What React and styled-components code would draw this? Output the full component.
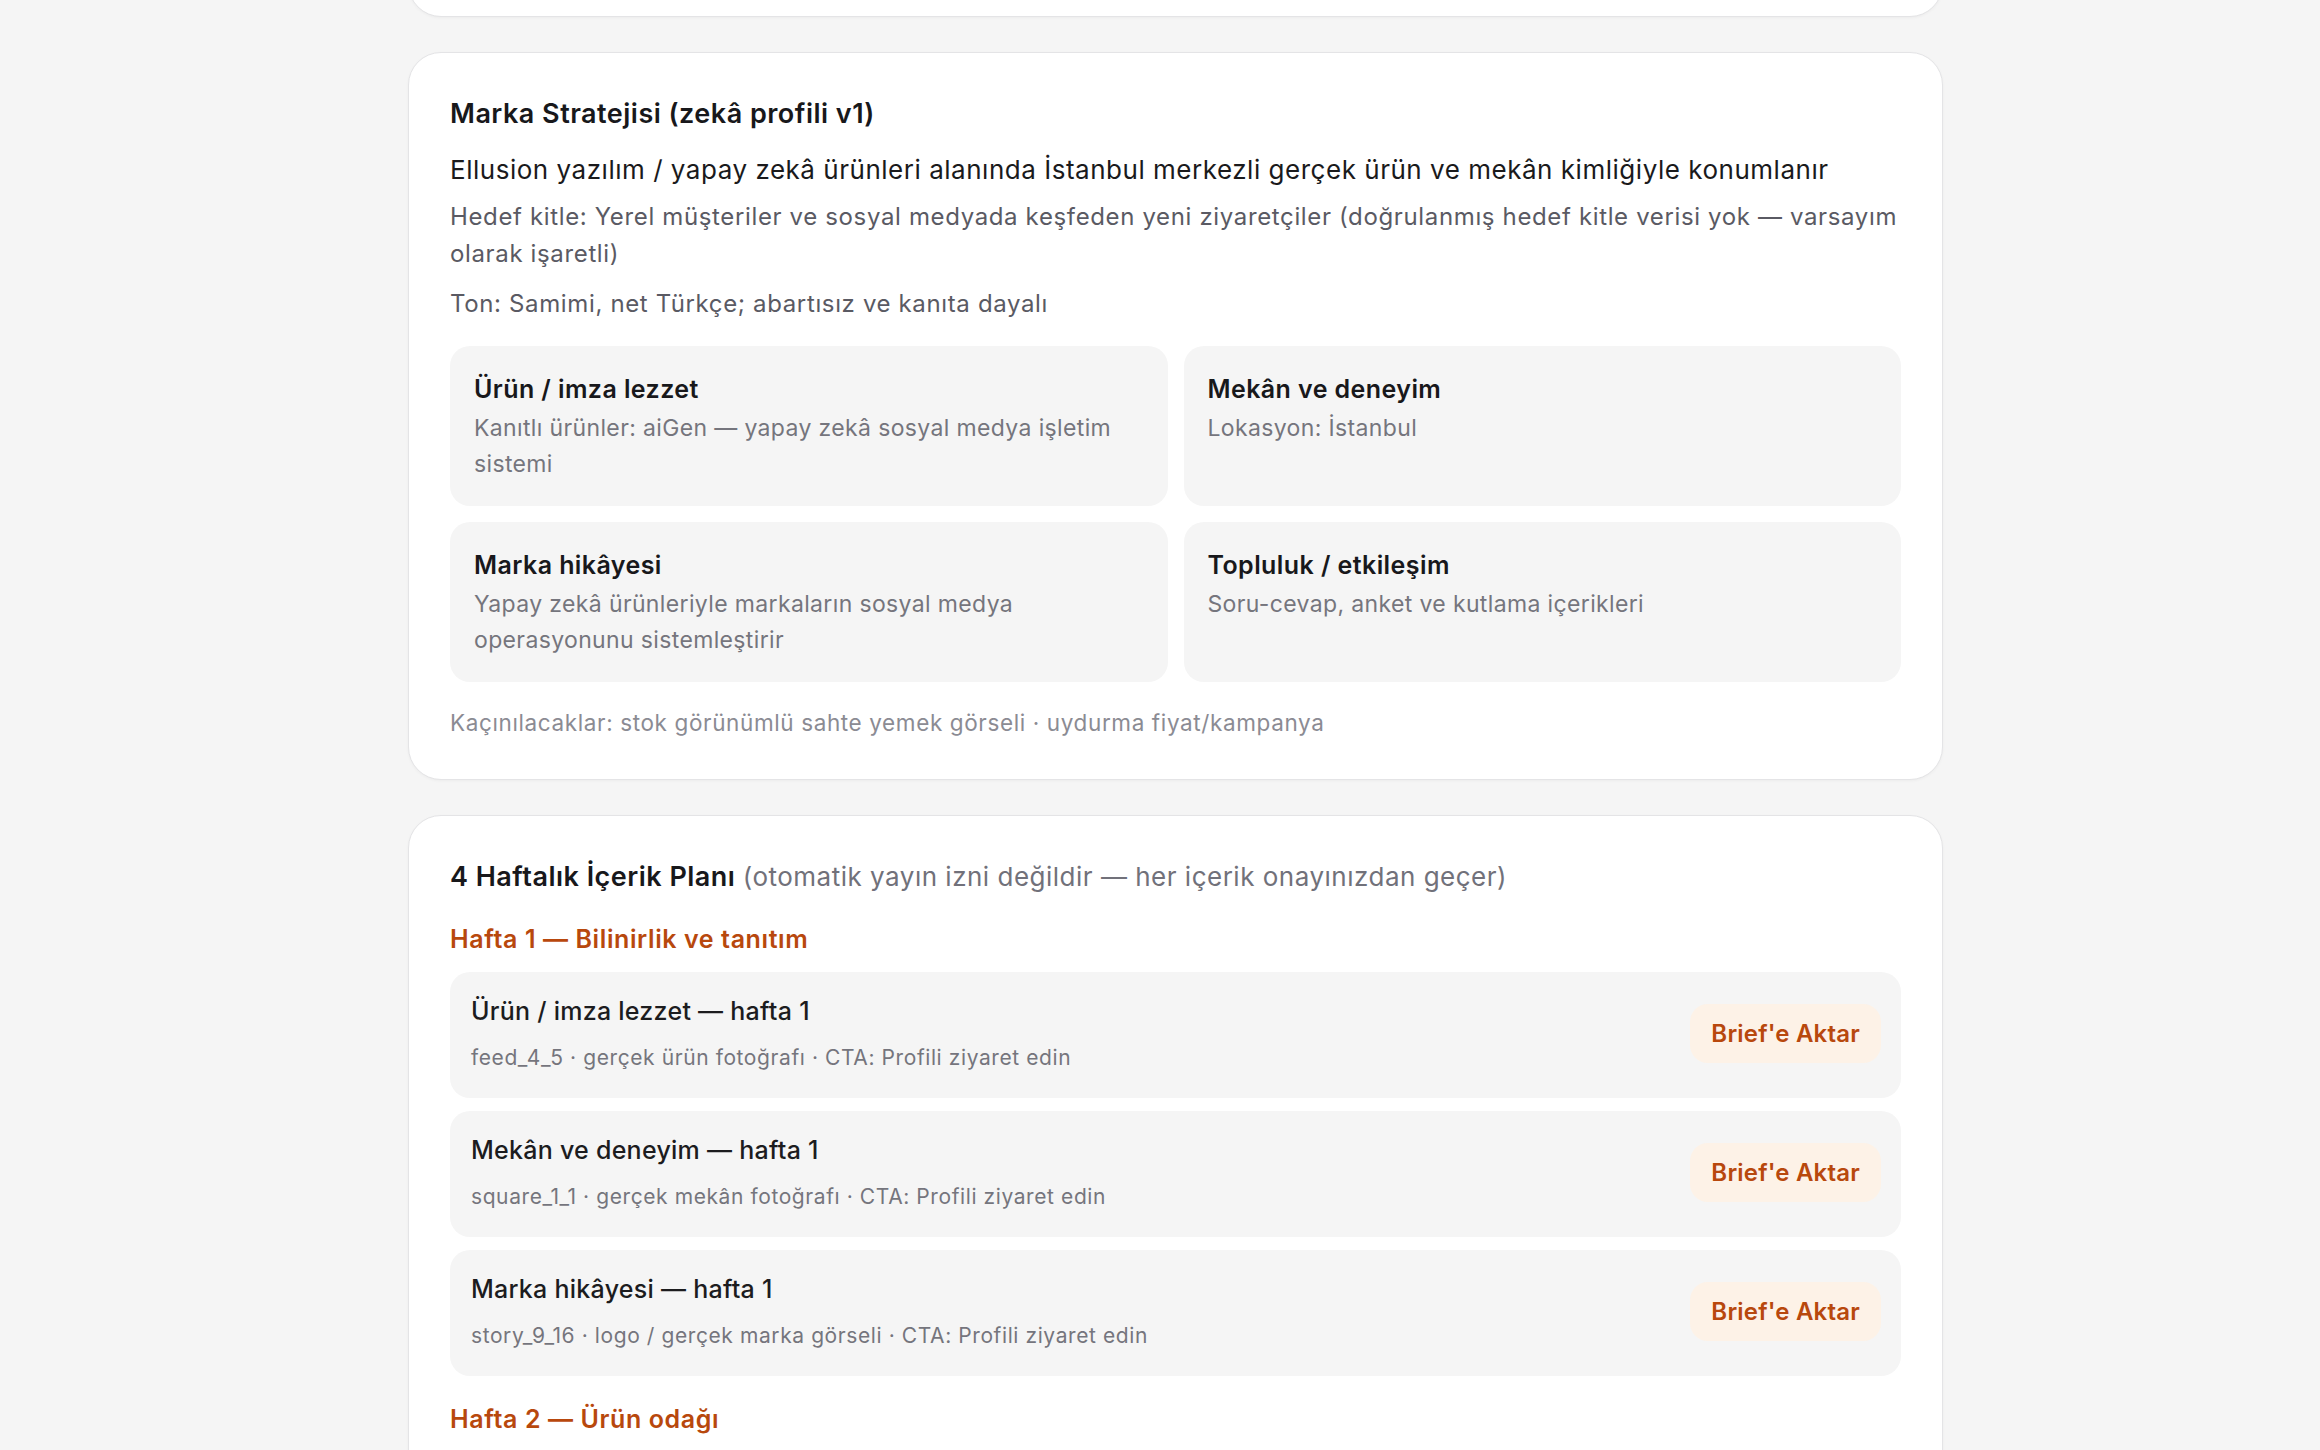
import React from "react";
import styled, { createGlobalStyle } from "styled-components";

const Global = createGlobalStyle`
  html, body { margin: 0; padding: 0; background: #f5f5f5; overflow: hidden; }
  body {
    font-family: Inter, "Noto Sans", "Liberation Sans", sans-serif;
    color: #1c1c1e;
    -webkit-font-smoothing: antialiased;
  }
  * { box-sizing: border-box; }
`;

const Page = styled.main`
  padding: 0 0 80px 408px;
`;

const Column = styled.div`
  width: 1535px;
  display: flex;
  flex-direction: column;
  gap: 35px;
  margin-top: -103px;
`;

const Card = styled.section`
  background: #ffffff;
  border: 1px solid #e4e4e6;
  border-radius: 33px;
  box-shadow: 0 1px 3px rgba(0, 0, 0, 0.04);
  padding: 42px 41px 40px;
`;

const StubCard = styled(Card)`
  height: 120px;
`;

const CardTitle = styled.h2`
  margin: 0;
  font-size: 27px;
  line-height: 38px;
  font-weight: 600;
  letter-spacing: 0.48px;
  color: #18181b;
`;

const TitleNote = styled.span`
  font-size: 26px;
  font-weight: 400;
  letter-spacing: 0.5px;
  color: #71717a;
`;

const Lead = styled.p`
  margin: 18px 0 0;
  font-size: 26px;
  line-height: 38px;
  letter-spacing: 0.52px;
  color: #1a1a1c;
`;

const Para = styled.p`
  margin: ${(p) => p.$gap}px 0 0;
  font-size: 24px;
  line-height: 37px;
  letter-spacing: 0.64px;
  color: #5a5a63;
`;

const PillarGrid = styled.div`
  margin-top: 24px;
  display: grid;
  grid-template-columns: 1fr 1fr;
  gap: 16px;
`;

const Pillar = styled.div`
  background: #f5f5f5;
  border-radius: 20px;
  padding: 25px 24px 24px;
`;

const PillarTitle = styled.div`
  font-size: 25px;
  line-height: 36px;
  font-weight: 600;
  letter-spacing: 0.42px;
  color: #18181b;
`;

const PillarText = styled.div`
  margin-top: 3px;
  font-size: 23px;
  line-height: 36px;
  letter-spacing: 0.36px;
  color: #75757d;
`;

const Note = styled.p`
  margin: 24px 0 0;
  font-size: 22.5px;
  line-height: 33px;
  letter-spacing: 0.62px;
  color: #8b8b93;
`;

const WeekTitle = styled.h3`
  margin: ${(p) => p.$gap}px 0 0;
  font-size: 25px;
  line-height: 36px;
  font-weight: 600;
  letter-spacing: 0.6px;
  color: #b8480d;
`;

const RowList = styled.div`
  margin-top: 15px;
  display: flex;
  flex-direction: column;
  gap: 13px;
`;

const PlanRow = styled.div`
  display: flex;
  align-items: center;
  justify-content: space-between;
  background: #f5f5f5;
  border-radius: 20px;
  padding: 21px 20px 25px 21px;
`;

const RowInfo = styled.div`
  display: flex;
  flex-direction: column;
`;

const RowTitle = styled.div`
  font-size: 25px;
  line-height: 36px;
  font-weight: 500;
  letter-spacing: 0.26px;
  color: #1c1c1e;
`;

const RowMeta = styled.div`
  margin-top: 14px;
  font-size: 21px;
  line-height: 30px;
  letter-spacing: 0.59px;
  color: #75757d;
`;

const BriefButton = styled.button`
  flex: none;
  height: 59px;
  padding: 0 21px;
  border: none;
  border-radius: 18px;
  background: #fdf2e7;
  color: #b8480d;
  font-family: inherit;
  font-size: 24px;
  font-weight: 600;
  letter-spacing: 0.2px;
  cursor: pointer;
`;

const pillars = [
  {
    title: "Ürün / imza lezzet",
    text: "Kanıtlı ürünler: aiGen — yapay zekâ sosyal medya işletim sistemi",
  },
  { title: "Mekân ve deneyim", text: "Lokasyon: İstanbul" },
  {
    title: "Marka hikâyesi",
    text: "Yapay zekâ ürünleriyle markaların sosyal medya operasyonunu sistemleştirir",
  },
  {
    title: "Topluluk / etkileşim",
    text: "Soru-cevap, anket ve kutlama içerikleri",
  },
];

const weeks = [
  {
    title: "Hafta 1 — Bilinirlik ve tanıtım",
    rows: [
      {
        title: "Ürün / imza lezzet — hafta 1",
        meta: "feed_4_5 · gerçek ürün fotoğrafı · CTA: Profili ziyaret edin",
      },
      {
        title: "Mekân ve deneyim — hafta 1",
        meta: "square_1_1 · gerçek mekân fotoğrafı · CTA: Profili ziyaret edin",
      },
      {
        title: "Marka hikâyesi — hafta 1",
        meta: "story_9_16 · logo / gerçek marka görseli · CTA: Profili ziyaret edin",
      },
    ],
  },
  {
    title: "Hafta 2 — Ürün odağı",
    rows: [
      {
        title: "Ürün / imza lezzet — hafta 2",
        meta: "feed_4_5 · gerçek ürün fotoğrafı · CTA: Profili ziyaret edin",
      },
      {
        title: "Topluluk / etkileşim — hafta 2",
        meta: "square_1_1 · gerçek ürün fotoğrafı · CTA: Profili ziyaret edin",
      },
    ],
  },
];

export default function App() {
  return (
    <>
      <Global />
      <Page>
        <Column>
          <StubCard />
          <Card>
            <CardTitle>Marka Stratejisi (zekâ profili v1)</CardTitle>
            <Lead>
              Ellusion yazılım / yapay zekâ ürünleri alanında İstanbul merkezli
              gerçek ürün ve mekân kimliğiyle konumlanır
            </Lead>
            <Para $gap={9}>
              Hedef kitle: Yerel müşteriler ve sosyal medyada keşfeden yeni
              ziyaretçiler (doğrulanmış hedef kitle verisi yok — varsayım olarak
              işaretli)
            </Para>
            <Para $gap={13}>Ton: Samimi, net Türkçe; abartısız ve kanıta dayalı</Para>
            <PillarGrid>
              {pillars.map((p) => (
                <Pillar key={p.title}>
                  <PillarTitle>{p.title}</PillarTitle>
                  <PillarText>{p.text}</PillarText>
                </Pillar>
              ))}
            </PillarGrid>
            <Note>
              Kaçınılacaklar: stok görünümlü sahte yemek görseli · uydurma
              fiyat/kampanya
            </Note>
          </Card>
          <Card>
            <CardTitle>
              4 Haftalık İçerik Planı{" "}
              <TitleNote>
                (otomatik yayın izni değildir — her içerik onayınızdan geçer)
              </TitleNote>
            </CardTitle>
            {weeks.map((w) => (
              <React.Fragment key={w.title}>
                <WeekTitle $gap={25}>{w.title}</WeekTitle>
                <RowList>
                  {w.rows.map((r) => (
                    <PlanRow key={r.title}>
                      <RowInfo>
                        <RowTitle>{r.title}</RowTitle>
                        <RowMeta>{r.meta}</RowMeta>
                      </RowInfo>
                      <BriefButton>Brief'e Aktar</BriefButton>
                    </PlanRow>
                  ))}
                </RowList>
              </React.Fragment>
            ))}
          </Card>
        </Column>
      </Page>
    </>
  );
}
